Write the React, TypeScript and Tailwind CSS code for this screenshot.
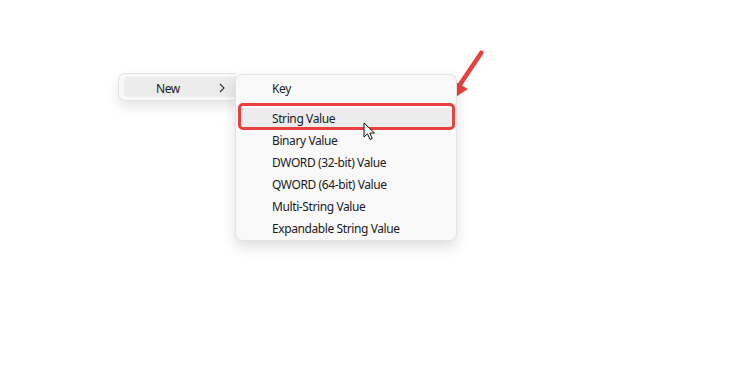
import React from "react";

const items = [
  "Binary Value",
  "DWORD (32-bit) Value",
  "QWORD (64-bit) Value",
  "Multi-String Value",
  "Expandable String Value",
];

export default function App() {
  return (
    <div
      className="relative w-[735px] h-[384px] bg-white overflow-hidden text-[#1b1b1b] tracking-[-0.4px]"
      style={{ fontFamily: '"Noto Sans", "Open Sans", sans-serif' }}
    >
      <div className="flex items-start pt-[73px] pl-[118px]">
        {/* Left menu */}
        <div className="w-[118px] h-[28px] rounded-l-[7px] border border-r-0 border-[#e3e3e3] bg-[#f9f9f9] shadow-[0_6px_12px_rgba(0,0,0,0.10)] pt-[3px] pl-[5px]">
          <div className="flex items-center h-[20px] rounded-l-[4px] bg-[#ececec] pl-[32px] pr-[11px] text-[12px]">
            <span className="flex-1 pt-[3px]">New</span>
            <svg className="mt-[2px]" width="6" height="10" viewBox="0 0 6 10">
              <polyline points="1,1 5,5 1,9" fill="none" stroke="#333" strokeWidth="1.1" />
            </svg>
          </div>
        </div>
        {/* Submenu */}
        <div className="relative z-10 -ml-px mt-px w-[222px] h-[167px] rounded-[7px] border border-[#e3e3e3] bg-[#f9f9f9] shadow-[0_6px_14px_rgba(0,0,0,0.13)] pt-[2px] text-[12px]">
          <div className="h-[22px] flex items-center pl-[36px] pt-[1px]">Key</div>
          <div className="h-[8px]" />
          <div className="relative h-[22px] flex items-center">
            <div className="absolute inset-x-[4px] inset-y-[1px] rounded-[4px] bg-[#ececec]" />
            <span className="relative pl-[36px] pt-[1px]">String Value</span>
            <div className="absolute left-[2px] right-[1px] top-[-4px] bottom-[-1px] rounded-[5px] border-[3.5px] border-[#e8403e]" />
          </div>
          {items.map((t) => (
            <div key={t} className="h-[22px] flex items-center pl-[36px] pt-[1px]">
              {t}
            </div>
          ))}
          {/* cursor */}
          <svg
            className="absolute left-[127px] top-[47px]"
            width="14"
            height="20"
            viewBox="0 0 14 20"
          >
            <path
              d="M1 1 L1 15 L4.5 11.8 L7 17.5 L9.2 16.5 L6.8 11 L11.5 11 Z"
              fill="white"
              stroke="#111"
              strokeWidth="1"
              strokeLinejoin="round"
            />
          </svg>
        </div>
      </div>
      {/* red annotation arrow */}
      <svg className="absolute left-[440px] top-[45px]" width="50" height="60" viewBox="0 0 50 60">
        <line x1="41.5" y1="7.5" x2="19" y2="41" stroke="#e8403e" strokeWidth="4.5" strokeLinecap="round" />
        <polygon points="14,53 7,32 28,44" fill="#e8403e" />
      </svg>
    </div>
  );
}
